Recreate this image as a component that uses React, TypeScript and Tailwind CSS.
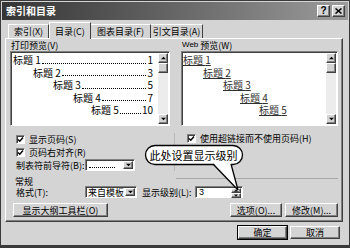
import React from "react";

const raised =
  "bg-[#d4d4d4] border border-t-white border-l-white border-b-[#404040] border-r-[#404040] shadow-[inset_-1px_-1px_0_#808080]";
const sunken =
  "bg-white border border-t-[#808080] border-l-[#808080] border-b-white border-r-white shadow-[inset_1px_1px_0_#404040]";

function Tri({ up, size = 5 }: { up?: boolean; size?: number }) {
  return (
    <svg width={size} height={Math.ceil(size / 2) + 1} viewBox="0 0 6 4">
      {up ? <polygon points="0,3.5 3,0.5 6,3.5" fill="#000" /> : <polygon points="0,0.5 6,0.5 3,3.5" fill="#000" />}
    </svg>
  );
}

function ScrollBar() {
  return (
    <div className="flex w-[10px] flex-col bg-[#ececec]">
      <div className={`${raised} flex h-[10px] items-center justify-center`}>
        <Tri up />
      </div>
      <div className={`${raised} h-[10px]`} />
      <div className="flex-1" />
      <div className={`${raised} flex h-[10px] items-center justify-center`}>
        <Tri />
      </div>
    </div>
  );
}

function Check({ label }: { label: string }) {
  return (
    <div className="flex items-center gap-[4px]">
      <div className={`${sunken} flex h-[9px] w-[9px] items-center justify-center`}>
        <svg width="7" height="7" viewBox="0 0 7 7">
          <path d="M1 3.5 L2.8 5.3 L6 1.5" stroke="#000" strokeWidth="1.4" fill="none" />
        </svg>
      </div>
      <span>{label}</span>
    </div>
  );
}

function Btn({ label, w, def }: { label: string; w: string; def?: boolean }) {
  return (
    <div
      className={`${raised} ${w} ${def ? "outline outline-1 outline-black" : ""} flex h-full items-center justify-center`}
    >
      {label}
    </div>
  );
}

const printRows = [
  { pl: "pl-[1px]", t: "标题 1", n: "1" },
  { pl: "pl-[21px]", t: "标题 2", n: "3" },
  { pl: "pl-[41px]", t: "标题 3", n: "5" },
  { pl: "pl-[61px]", t: "标题 4", n: "7" },
  { pl: "pl-[79px]", t: "标题 5", n: "10" },
];
const webRows = ["pl-[0px]", "pl-[20px]", "pl-[40px]", "pl-[57px]", "pl-[76px]"];

export default function App() {
  return (
    <div className="relative h-[248px] w-[350px] whitespace-nowrap bg-[#3a3a3a] p-[1px] pb-[3px] font-['Noto_Sans_CJK_SC','Liberation_Sans',sans-serif] text-[9px] leading-none text-black">
      <div className="flex h-full flex-col bg-[#d4d4d4] p-[1px]">
        {/* title bar */}
        <div className="flex h-[18px] items-center bg-linear-to-r from-[#353535] to-[#9c9c9c] pl-[4px] pr-[3px]">
          <span className="flex-1 text-[10px] font-bold text-white">索引和目录</span>
          <div className={`${raised} flex h-[12px] w-[13px] items-center justify-center font-['Liberation_Sans',sans-serif] text-[10px] font-bold`}>?</div>
          <div className={`${raised} ml-[2px] flex h-[12px] w-[13px] items-center justify-center`}>
            <svg width="7" height="6" viewBox="0 0 7 6">
              <path d="M0.5 0.5 L6.5 5.5 M6.5 0.5 L0.5 5.5" stroke="#000" strokeWidth="1.5" />
            </svg>
          </div>
        </div>

        {/* tabs */}
        <div className="mt-[1px] flex h-[17px] items-end pl-[6px]">
          <div className="flex h-[14px] w-[41px] items-center justify-center border-l border-t border-r border-l-white border-t-white border-r-[#404040]">
            索引(X)
          </div>
          <div className="relative z-10 -mb-[1px] flex h-[17px] w-[42px] items-center justify-center border-l border-t border-r border-l-white border-t-white border-r-[#404040] bg-[#d4d4d4]">
            目录(C)
          </div>
          <div className="flex h-[14px] w-[60px] items-center justify-center border-t border-r border-t-white border-r-[#404040]">
            图表目录(F)
          </div>
          <div className="flex h-[14px] w-[52px] items-center justify-center border-t border-r border-t-white border-r-[#404040]">
            引文目录(A)
          </div>
        </div>

        {/* panel */}
        <div className="ml-[3px] flex h-[184px] w-[338px] flex-col border border-t-white border-l-white border-b-[#404040] border-r-[#404040] shadow-[inset_-1px_-1px_0_#808080]">
          <div className="flex gap-[11px] pl-[4px]">
            {/* print preview */}
            <div className="flex w-[160px] flex-col">
              <div className="flex h-[12px] items-center pl-[1px]">打印预览(V)</div>
              <div className={`${sunken} flex h-[75px] p-[1px]`}>
                <div className="flex flex-1 flex-col pt-[1px] pr-[5px] text-[10px]">
                  {printRows.map((r) => (
                    <div key={r.t} className={`flex h-[12.5px] items-center ${r.pl}`}>
                      <span>{r.t}</span>
                      <span className="mx-[1px] h-0 flex-1 translate-y-[3px] border-b border-dotted border-black" />
                      <span>{r.n}</span>
                    </div>
                  ))}
                </div>
                <ScrollBar />
              </div>
            </div>
            {/* web preview */}
            <div className="flex w-[157px] flex-col">
              <div className="flex h-[12px] items-center pl-[1px]">
                <span className="font-['Liberation_Sans',sans-serif] text-[8px]">Web</span>&nbsp;预览(W)
              </div>
              <div className={`${sunken} flex h-[75px] p-[1px]`}>
                <div className="flex flex-1 flex-col pt-[1px] text-[10px] text-[#303030]">
                  {webRows.map((pl, i) => (
                    <div key={pl} className={`flex h-[12.5px] items-center ${pl}`}>
                      <span className="underline underline-offset-[1px]">标题 {i + 1}</span>
                    </div>
                  ))}
                </div>
                <ScrollBar />
              </div>
            </div>
          </div>

          {/* options area */}
          <div className="relative mt-[7px] flex">
            <div className="flex w-[168px] flex-col pl-[10px]">
              <div className="flex h-[13px] items-center">
                <Check label="显示页码(S)" />
              </div>
              <div className="flex h-[13px] items-center">
                <Check label="页码右对齐(R)" />
              </div>
              <div className="flex h-[12px] items-center">
                <span className="w-[69px]">制表符前导符(B):</span>
                <div className={`${sunken} flex h-[12px] w-[50px] items-center p-[1px]`}>
                  <span className="ml-[2px] h-0 w-[26px] flex-none translate-y-[2px] border-b border-dotted border-black" />
                  <span className="flex-1" />
                  <div className={`${raised} flex h-full w-[10px] items-center justify-center`}>
                    <Tri />
                  </div>
                </div>
              </div>
            </div>
            <div className="flex flex-1 flex-col border-l border-[#b8b8b8] pl-[12px]">
              <div className="flex h-[10px] items-center">
                <Check label="使用超链接而不使用页码(H)" />
              </div>
            </div>
          </div>

          {/* 常规 */}
          <div className="mt-[5px] flex h-[10px] items-center pl-[9px]">
            <span>常规</span>
            <span className="ml-[143px] mr-[4px] h-0 flex-1 -translate-y-[3px] border-t border-[#a8a8a8]" />
          </div>
          <div className="flex h-[12px] items-center pl-[10px]">
            <span className="w-[69px]">格式(T):</span>
            <div className={`${sunken} flex h-[12px] w-[52px] items-center p-[1px]`}>
              <span className="ml-[1px] flex-1">来自模板</span>
              <div className={`${raised} flex h-full w-[10px] items-center justify-center`}>
                <Tri />
              </div>
            </div>
            <span className="ml-[5px] w-[53px]">显示级别(L):</span>
            <div className={`${sunken} flex h-[12px] w-[48px] items-center p-[1px]`}>
              <span className="ml-[2px] flex-1 font-['Liberation_Sans',sans-serif] text-[9px]">3</span>
              <div className="flex h-full w-[10px] flex-col">
                <div className={`${raised} flex flex-1 items-center justify-center`}>
                  <Tri up size={4} />
                </div>
                <div className={`${raised} flex flex-1 items-center justify-center`}>
                  <Tri size={4} />
                </div>
              </div>
            </div>
          </div>
          <div className="mt-[5px] flex h-[14px] pl-[7px] pr-[4px]">
            <Btn label="显示大纲工具栏(O)" w="w-[95px]" />
            <span className="flex-1" />
            <Btn label="选项(O)..." w="w-[52px]" />
            <span className="w-[3px]" />
            <Btn label="修改(M)..." w="w-[53px]" />
          </div>
        </div>

        {/* bottom buttons */}
        <div className="mt-[4px] flex h-[13px] justify-end pr-[8px]">
          <Btn label="确定" w="w-[49px]" def />
          <span className="w-[3px]" />
          <Btn label="取消" w="w-[50px]" />
        </div>
      </div>

      {/* callout */}
      <svg className="pointer-events-none absolute left-0 top-0" width="350" height="248">
        <rect x="145.5" y="145.5" width="97" height="19" rx="9.5" fill="#fff" stroke="#000" strokeWidth="1.3" />
        <polygon points="213,163 238,190 231,163" fill="#fff" />
        <path d="M213 164 L238 190 L231 164" stroke="#000" strokeWidth="1.3" fill="none" />
      </svg>
      <div className="pointer-events-none absolute left-[145px] top-[145px] flex h-[20px] w-[97px] items-center justify-center text-[11px] text-black">
        此处设置显示级别
      </div>
    </div>
  );
}
